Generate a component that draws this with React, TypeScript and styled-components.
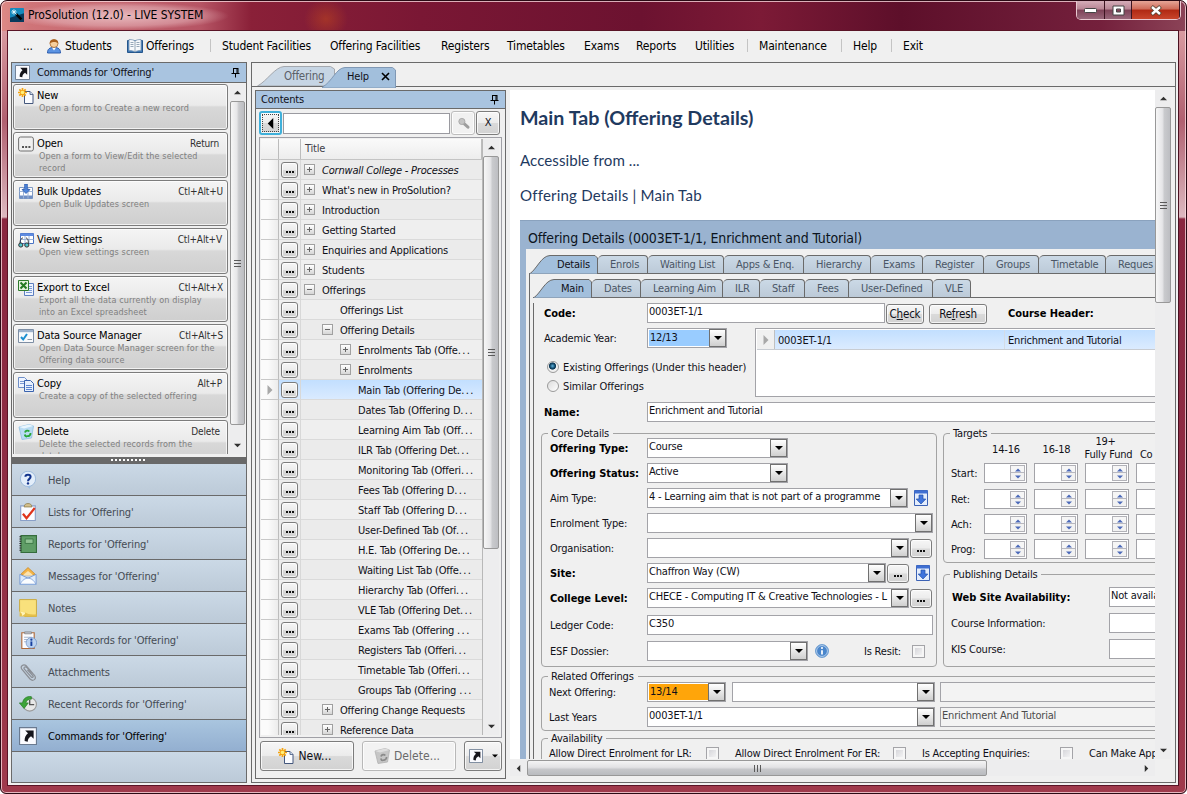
import React from 'react';
import styled, { createGlobalStyle, css } from 'styled-components';

const Global = createGlobalStyle`
  *, *::before, *::after { box-sizing: border-box; }
  html, body { margin: 0; padding: 0; overflow: hidden; }
  body {
    font-family: 'DejaVu Sans Condensed', 'DejaVu Sans', sans-serif;
    font-stretch: condensed;
    font-size: 11px;
    letter-spacing: -0.2px;
    line-height: 14px;
    color: #101018;
  }
`;

/* ---------- window frame ---------- */

const Frame = styled.div`
  width: 1187px;
  height: 794px;
  display: flex;
  flex-direction: column;
  padding: 0 7px 7px 6px;
  border: 1px solid #2a0a14;
  border-radius: 7px 7px 6px 6px;
  background:
    radial-gradient(ellipse 110px 14px at 118px 15px, rgba(240, 205, 208, 0.8) 0, rgba(230, 180, 186, 0.55) 70%, rgba(200, 120, 135, 0) 100%) 0 0 / 100% 30px no-repeat,
    radial-gradient(ellipse 22px 20px at 325px 18px, rgba(190, 70, 30, 0.55), rgba(160, 50, 40, 0)) 0 0 / 100% 30px no-repeat,
    linear-gradient(90deg, #dd8a86 0, #cf7478 30px, #b65464 200px, #8a2038 250px, #7a1734 420px, #6c1230 640px, #7c1a36 760px, #5d0f2a 900px, #74203c 1100px, #8c4458 1187px) 0 0 / 100% 30px no-repeat,
    linear-gradient(180deg, #d99aa0 30px, #b06070 120px, #ddb9c0 216px, #8a2740 218px, #8f2d44 500px, #a03a4c 794px);
  box-shadow: inset 0 0 0 1px rgba(255, 225, 230, 0.75);
`;

const TitleBar = styled.div`
  height: 29px;
  flex: none;
  display: flex;
  padding-left: 3px;
`;

const TitleText = styled.div`
  margin: 7px 0 0 4px;
  font-size: 12px;
  line-height: 15px;
  height: 15px;
  letter-spacing: -0.07px;
  color: #000;
`;

const WinButtons = styled.div`
  margin-left: auto;
  margin-right: -2px;
  display: flex;
  height: 19px;
  border: 1px solid #e9c9d0;
  border-top: 0;
  border-radius: 0 0 5px 5px;
  overflow: hidden;
`;

const WinButton = styled.div<{ $w: number; $close?: boolean }>`
  width: ${(p) => p.$w}px;
  display: flex;
  align-items: center;
  justify-content: center;
  border-right: 1px solid #3c1420;
  background: ${(p) =>
    p.$close
      ? 'linear-gradient(180deg, #e6a597 0, #cf6a58 45%, #b02813 50%, #c8452c 100%)'
      : 'linear-gradient(180deg, #d5adb8 0, #b88594 45%, #7e4257 50%, #98677a 100%)'};
`;

const Client = styled.div`
  flex: 1;
  min-height: 0;
  display: flex;
  flex-direction: column;
  background: #f0f0f0;
  border: 1px solid #5a1426;
  border-right-color: #4a1020;
`;

/* ---------- menu ---------- */

const MenuBar = styled.div`
  height: 31px;
  flex: none;
  display: flex;
  align-items: center;
  padding-bottom: 2px;
  font-size: 12px;
  letter-spacing: -0.17px;
  color: #000;
`;

const MenuItem = styled.div<{ $w: number }>`
  width: ${(p) => p.$w}px;
  flex: none;
  display: flex;
  align-items: center;
  gap: 3px;
  white-space: nowrap;
`;

const MenuSep = styled.div`
  width: 1px;
  height: 13px;
  background: #c4c4c4;
  margin-right: 11px;
`;

const Workspace = styled.div`
  flex: 1;
  min-height: 0;
  display: flex;
  padding: 0 2px 2px 3px;
  gap: 4px;
`;

/* ---------- shared pieces ---------- */

const PanelHeader = styled.div<{ $h: number }>`
  height: ${(p) => p.$h}px;
  flex: none;
  display: flex;
  align-items: center;
  background: #a9c4e0;
  border-bottom: 1px solid #6a6a6a;
`;

const Spacer = styled.div`
  flex: 1;
`;

const VBar = styled.div<{ $w?: number }>`
  width: ${(p) => p.$w ?? 16}px;
  flex: none;
  display: flex;
  flex-direction: column;
  background: #ededee;
`;

const Arrow = styled.div<{ $len: number; $row?: boolean }>`
  ${(p) => (p.$row ? `width: ${p.$len}px;` : `height: ${p.$len}px;`)}
  flex: none;
  display: flex;
  align-items: center;
  justify-content: center;
`;

const Thumb = styled.div<{ $len: number; $row?: boolean }>`
  ${(p) =>
    p.$row
      ? `width: ${p.$len}px; background: linear-gradient(180deg, #f4f4f4, #e2e2e4 45%, #c6c7ca 60%, #b9bbbf);`
      : `height: ${p.$len}px; background: linear-gradient(90deg, #f6f6f6, #e6e6e8 45%, #c9cacd 60%, #bdbec2);`}
  flex: none;
  border: 1px solid #989898;
  border-radius: 2px;
  display: flex;
  align-items: center;
  justify-content: center;
`;

const Tri = ({ dir, size = 7, color = '#303030' }: { dir: 'up' | 'down' | 'left' | 'right'; size?: number; color?: string }) => {
  const d = { up: 'M0 6 4 2 8 6z', down: 'M0 2 8 2 4 6z', left: 'M6 0 6 8 2 4z', right: 'M2 0 2 8 6 4z' }[dir];
  return (
    <svg width={size} height={size} viewBox="0 0 8 8">
      <path d={d} fill={color} />
    </svg>
  );
};

const Grip = ({ row }: { row?: boolean }) => (
  <svg width="9" height="9" viewBox="0 0 9 9">
    {[1, 4, 7].map((n) =>
      row ? (
        <path key={n} d={`M${n + 0.5} 1v7`} stroke="#5a5a5a" />
      ) : (
        <path key={n} d={`M1 ${n + 0.5}h7`} stroke="#5a5a5a" />
      ),
    )}
  </svg>
);

const Pin = () => (
  <svg width="9" height="11" viewBox="0 0 9 11">
    <path d="M2.5 1v5M2 1.5h5M6 1v5M7 1v5M0.5 6.5h8M4.5 6.5v4" fill="none" stroke="#000" />
  </svg>
);

/* ---------- icons ---------- */

type IconName =
  | 'wand' | 'user' | 'book' | 'shortcut' | 'new' | 'dots' | 'bulk' | 'view' | 'excel' | 'source' | 'copy' | 'bin'
  | 'help' | 'list' | 'report' | 'mail' | 'note' | 'audit' | 'clip' | 'recent' | 'binGrey' | 'search' | 'down' | 'info';

const art: Record<IconName, React.ReactNode> = {
  wand: (
    <>
      <rect x="0" y="0" width="16" height="16" rx="1" fill="#1489bd" />
      <path d="M0 16v-5l16-5v10z" fill="#083a5c" />
      <path d="M7 7l6 6" stroke="#000" strokeWidth="3" />
      <path d="M4.500 1.500v6M1.500 4.500h6M2.500 2.500l5 5M6.500 2.500l-4 4" stroke="#e8fbff" strokeWidth="1" />
    </>
  ),
  user: (
    <>
      <path d="M1.500 15c0-4 2-5.500 6.500-5.500s6.500 1.500 6.500 5.500z" fill="#5b93e2" stroke="#2c5cae" />
      <path d="M6 9.500l2 3 2-3z" fill="#fff" />
      <circle cx="8" cy="5.500" r="4" fill="#f7cf9c" stroke="#a6672c" strokeWidth=".8" />
      <path d="M3.800 5.500C3 0 13 0 12.200 5.500 10.500 3.500 6 3.500 3.800 5.500z" fill="#a8601f" />
    </>
  ),
  book: (
    <>
      <path d="M0.500 2.500h15v12h-15z" fill="#3f79b5" stroke="#25568c" />
      <path d="M2 1.500c3 0 5 .5 6 1.500 1-1 3-1.500 6-1.500v11c-3 0-5 .5-6 1.500-1-1-3-1.500-6-1.500z" fill="#f6f9fc" stroke="#7b98b5" strokeWidth=".8" />
      <path d="M8 3v11M3.500 4.500h3M3.500 6.500h3M3.500 8.500h3M9.500 4.500h3M9.500 6.500h3M9.500 8.500h3" stroke="#8b9db0" strokeWidth=".9" />
    </>
  ),
  shortcut: (
    <>
      <path d="M.5.5h15v15H.5z" fill="#fafbff" stroke="#6a7a90" />
      <path d="M5.500 3h7.500v7.500l-2.300-2.300C8.500 9.500 7.800 11 7.800 13L5 12.500c-.2-3 1-5.500 3-7z" fill="#15151c" />
    </>
  ),
  new: (
    <>
      <path d="M6.500 3.500h5.500l3 3v9H6.500z" fill="#fbfcff" stroke="#44577c" />
      <path d="M12 3.500v3h3" fill="#cfdcf0" stroke="#44577c" strokeWidth=".8" />
      <path d="M4.500 0v9M0 4.500h9M1.300 1.300l6.400 6.400M7.700 1.300L1.300 7.700" stroke="#f4a310" strokeWidth="1.700" />
      <circle cx="4.500" cy="4.500" r="1.800" fill="#fff07a" />
    </>
  ),
  dots: (
    <>
      <rect x=".6" y="1" width="14.800" height="14" rx="2" fill="#f0f0f0" stroke="#707070" />
      <path d="M4 11h2M7.200 11h2M10.400 11h2" stroke="#202020" strokeWidth="1.600" />
    </>
  ),
  bulk: (
    <>
      <path d="M1.500 3.500h13v11h-13z" fill="#fff" stroke="#7f9ac4" />
      <path d="M1.500 11.500h13v3h-13z" fill="#6f8ec4" />
      <path d="M1.500 7.500h13M5.500 3.500v11M10 3.500v11" stroke="#9db4d8" />
      <path d="M6.700 0h2.600v5.500H12L8 9.500 4 5.500h2.700z" fill="#4f86dc" stroke="#2a58ac" strokeWidth=".8" />
    </>
  ),
  view: (
    <>
      <path d="M2.500 1.500h13v10h-13z" fill="#fff" stroke="#4a74c4" />
      <path d="M2.500 1.500h13v2.500h-13z" fill="#5e8be0" />
      <path d="M2.500 7.500h13M7 4v7.500M11 4v7.500" stroke="#9db4d8" />
      <path d="M2 12c0-4 1-6 3-6M10.500 12c0-4-1-6-2.500-6" stroke="#333" fill="none" />
      <circle cx="2.800" cy="13" r="2.100" fill="#4fc4cc" stroke="#333" />
      <circle cx="8.800" cy="13" r="2.100" fill="#4fc4cc" stroke="#333" />
    </>
  ),
  excel: (
    <>
      <path d="M6.500 3.500h9v12h-9z" fill="#eef4ff" stroke="#5c7fc0" />
      <path d="M8 12.500h6M11 6.500h3M11 8.500h3M11 10.500h3" stroke="#7b9ad4" />
      <path d="M.5.500h10v10H.5z" fill="#e5f2df" stroke="#2d7a2b" />
      <path d="M2.500 2.500l6 6M8.500 2.500l-6 6" stroke="#257a24" strokeWidth="2" />
    </>
  ),
  source: (
    <>
      <path d="M.5 1.500h15v13H.5z" fill="#f8fafc" stroke="#7d8ea4" />
      <path d="M1 2h14v2.200H1z" fill="#9db2cc" />
      <path d="M3 9l2.200 2.500L9 6" fill="none" stroke="#1c8fd0" strokeWidth="2" />
      <path d="M9.500 11.500h4.500" stroke="#8a96a4" />
    </>
  ),
  copy: (
    <>
      <path d="M.5 1.500h6l3 3v7h-9z" fill="#eef4ff" stroke="#6f8fc8" />
      <path d="M2 5.500h5M2 7.500h5" stroke="#7b9ad4" />
      <path d="M6.500 4.500h6l3 3v8h-9z" fill="#e6effd" stroke="#3a63ae" />
      <path d="M8 9.500h6M8 11.500h6M8 13.500h6" stroke="#5d85cf" />
    </>
  ),
  bin: (
    <>
      <path d="M1 3l10-2.500L15.500 2 13.500 14 4 15.500z" fill="#b9dcf4" stroke="#8fbfe2" strokeWidth=".8" />
      <path d="M1 3l10-2.500L15.500 2 6 4.500z" fill="#e9f6fe" />
      <path d="M7 8.500c.5-2 3-2.500 4.300-1M12.500 9c.2 2-1.500 3.500-3.500 3M6.800 10.500c.2 1 1 2 2.200 2" fill="none" stroke="#28a838" strokeWidth="1.900" />
    </>
  ),
  binGrey: (
    <>
      <path d="M1 3l10-2.500L15.500 2 13.500 14 4 15.500z" fill="#c6c6c6" stroke="#b2b2b2" strokeWidth=".8" />
      <path d="M1 3l10-2.500L15.500 2 6 4.500z" fill="#dedede" />
      <path d="M7 8.500c.5-2 3-2.500 4.300-1M12.500 9c.2 2-1.500 3.500-3.500 3M6.800 10.500c.2 1 1 2 2.200 2" fill="none" stroke="#8a8a8a" strokeWidth="1.700" />
    </>
  ),
  help: (
    <>
      <circle cx="8" cy="7" r="6.800" fill="#e3eefa" stroke="#8fb0d6" strokeWidth=".7" />
      <path d="M7 13.500l2.500 2.500.7-3z" fill="#9fbfe4" />
      <path d="M5.700 5.200C5.700 2.600 10.300 2.600 10.300 5.200 10.300 7 8 7 8 9" fill="none" stroke="#12338c" strokeWidth="1.800" />
      <circle cx="8" cy="11" r="1.100" fill="#12338c" />
    </>
  ),
  list: (
    <>
      <path d="M1.500 2.500h13v13h-13z" fill="#fbfcff" stroke="#8aa0c8" />
      <path d="M4.500 3.500C5 1 6 .5 8 .5s3 .5 3.500 3z" fill="#d5c08c" stroke="#8d7a4a" strokeWidth=".7" />
      <path d="M3.500 9.500l3.200 4L14 4.500" fill="none" stroke="#e0341c" strokeWidth="2" />
    </>
  ),
  report: (
    <>
      <path d="M1.800.5h13.700v15H1.800z" fill="#5f9d66" stroke="#356c3c" />
      <path d="M5.500 3.500h7v4h-7z" fill="#8fc293" stroke="#3c7745" strokeWidth=".8" />
      <path d="M1.200 1v14" stroke="#222" strokeWidth="1.600" strokeDasharray="1 1" />
    </>
  ),
  mail: (
    <>
      <path d="M1 7l7-6.500L15 7z" fill="#f5b547" stroke="#c98a26" strokeWidth=".7" />
      <path d="M3 7.500L8 3.500l5 4z" fill="#fbe3b0" />
      <path d="M.8 6.500L8 10l7.200-3.500v9H.8z" fill="#dcebfc" stroke="#7397d2" strokeWidth=".8" />
      <path d="M1 15.300c2-4 4.500-5.300 7-5.300s5 1.300 7 5.300z" fill="#fbfdff" stroke="#86a7da" strokeWidth=".8" />
    </>
  ),
  note: (
    <>
      <path d="M.5.500h15v15H5L.5 11z" fill="#f9e17c" stroke="#c7a63a" strokeWidth=".8" />
      <path d="M.5 11v4.500H15.500v-2C11 14 7.500 13.500 5.500 12z" fill="#e5c04a" />
      <path d="M.5 11c2 1.500 2.500 2.500 2 4 2-.5 3-1.500 3-3z" fill="#fff4b8" />
    </>
  ),
  audit: (
    <>
      <path d="M2.500 1.500h11v14h-11z" fill="#fbfcff" stroke="#b06a3a" />
      <path d="M5 2.500h6V.800H5z" fill="#c3c9d4" stroke="#777" strokeWidth=".6" />
      <path d="M4.500 5.500h7M4.500 7.500h5M4.500 9.500h4" stroke="#a8b6cc" />
      <circle cx="11" cy="10.500" r="4.700" fill="#bcd3f0" stroke="#7597c8" strokeWidth=".7" />
      <path d="M11 9.300v4" stroke="#163f9e" strokeWidth="1.700" />
      <circle cx="11" cy="7.700" r="1" fill="#163f9e" />
    </>
  ),
  clip: (
    <path
      d="M12.500 9.500L6.500 2.500C4 .3 .8 2.800 2.500 5.500l7.300 8.700c2.700 2.600 6.200 0 4-3.200L7 4C5.300 2.600 3.800 4 4.800 5.500l6.200 7c1 .8 2-.2 1.400-1L7.500 6"
      fill="none"
      stroke="#8b8f96"
      strokeWidth="1.100"
    />
  ),
  recent: (
    <>
      <circle cx="9.500" cy="8.300" r="6" fill="#e8e8e8" stroke="#9a9a9a" />
      <path d="M9.500 4.500v4h4" fill="none" stroke="#555" strokeWidth="1.200" />
      <path d="M11 1.500C7 .8 3.700 3 3.200 7H.3l4.200 5 3.800-5H6c.5-2 2.500-3.500 5-3.300z" fill="#3ea43a" stroke="#257a24" strokeWidth=".6" />
    </>
  ),
  search: (
    <>
      <path d="M8 7.500l5.500 5" stroke="#9d9d9d" strokeWidth="3.600" strokeLinecap="round" />
      <circle cx="6" cy="5.500" r="3.800" fill="#c4c4c4" stroke="#a2a2a2" />
    </>
  ),
  down: (
    <>
      <path d="M1.500.5h13v15h-13z" fill="#e4edfc" stroke="#3c62b4" />
      <path d="M1.500.5h13v3h-13z" fill="#3f6fd2" />
      <path d="M6 5h4v4h2.800L8 14 3.200 9H6z" fill="#3f74dc" stroke="#2450a8" strokeWidth=".7" />
    </>
  ),
  info: (
    <>
      <circle cx="8" cy="8" r="7.400" fill="#4a86cb" stroke="#6a9cd0" />
      <circle cx="8" cy="8" r="6.200" fill="none" stroke="#cfe2f6" strokeWidth=".9" />
      <path d="M8 7v5" stroke="#fff" strokeWidth="2" />
      <circle cx="8" cy="4.600" r="1.200" fill="#fff" />
    </>
  ),
};

const Svg = styled.svg`
  display: block;
  flex: none;
`;

const Icon = ({ name, size = 16 }: { name: IconName; size?: number }) => (
  <Svg width={size} height={size} viewBox="0 0 16 16">
    {art[name]}
  </Svg>
);

/* ---------- left panel ---------- */

const SidePanel = styled.div`
  width: 236px;
  flex: none;
  display: flex;
  flex-direction: column;
  border: 1px solid #6a6a6a;
  background: #f0f0f0;
`;

const CommandArea = styled.div`
  height: 374px;
  flex: none;
  display: flex;
  padding: 1px 1px 3px 1px;
`;

const CommandList = styled.div`
  width: 215px;
  height: 370px;
  overflow: hidden;
  display: flex;
  flex-direction: column;
  gap: 2px;
  margin-right: 2px;
`;

const Command = styled.div`
  height: 46px;
  flex: none;
  display: flex;
  padding: 3px 4px 0 4px;
  border: 1px solid #7c7c7c;
  border-radius: 3px;
  background: linear-gradient(180deg, #f4f4f4 0, #eaeaea 46%, #d8d8d8 50%, #cfcfcf 100%);
  box-shadow: inset 0 0 0 1px rgba(255, 255, 255, 0.7);
`;

const CommandText = styled.div`
  flex: 1;
  min-width: 0;
  padding-left: 3px;
`;

const CommandTop = styled.div`
  display: flex;
  justify-content: space-between;
  height: 14px;
  color: #000;
  line-height: 16px;
  letter-spacing: -0.15px;
`;

const Shortcut = styled.span<{ $inset?: number }>`
  font-size: 10px;
  letter-spacing: -0.15px;
  color: #303030;
  margin-right: ${(p) => p.$inset ?? 0}px;
`;

const CommandDesc = styled.div`
  padding-left: 2px;
  font-size: 9px;
  line-height: 12px;
  letter-spacing: 0.12px;
  color: #808080;
  white-space: pre;
`;

const Splitter = styled.div`
  height: 7px;
  flex: none;
  display: flex;
  align-items: center;
  justify-content: center;
  background: #696969;
`;

const Nav = styled.div`
  flex: 1;
  display: flex;
  flex-direction: column;
`;

const NavItem = styled.div<{ $active?: boolean }>`
  height: 32px;
  flex: none;
  display: flex;
  align-items: center;
  gap: 11px;
  padding-left: 7px;
  border-bottom: 1px solid #6a6a6a;
  letter-spacing: -0.12px;
  color: ${(p) => (p.$active ? '#000' : '#454b54')};
  background: ${(p) => (p.$active ? 'linear-gradient(180deg, #a9c5df, #93afd0)' : 'linear-gradient(180deg, #cbd9e6, #bccad8)')};
`;

const NavLabel = styled.span`
  padding-top: 2px;
`;

const NavRest = styled.div`
  flex: 1;
  background: linear-gradient(180deg, #cbd9e6, #bccad8);
`;

const commands: { icon: IconName; title: string; key?: string; inset?: number; desc: string }[] = [
  { icon: 'new', title: 'New', desc: 'Open a form to Create a new record' },
  { icon: 'dots', title: 'Open', key: 'Return', inset: 4, desc: 'Open a form to View/Edit the selected\nrecord' },
  { icon: 'bulk', title: 'Bulk Updates', key: 'Ctl+Alt+U', desc: 'Open Bulk Updates screen' },
  { icon: 'view', title: 'View Settings', key: 'Ctl+Alt+V', inset: 1, desc: 'Open view settings screen' },
  { icon: 'excel', title: 'Export to Excel', key: 'Ctl+Alt+X', desc: 'Export all the data currently on display\ninto an Excel spreadsheet' },
  { icon: 'source', title: 'Data Source Manager', key: 'Ctl+Alt+S', desc: 'Open Data Source Manager screen for the\nOffering data source' },
  { icon: 'copy', title: 'Copy', key: 'Alt+P', inset: 1, desc: 'Create a copy of the selected offering' },
  { icon: 'bin', title: 'Delete', key: 'Delete', inset: 3, desc: 'Delete the selected records from the\ndatabase' },
];

const navItems: { icon: IconName; label: string; active?: boolean }[] = [
  { icon: 'help', label: 'Help' },
  { icon: 'list', label: "Lists for 'Offering'" },
  { icon: 'report', label: "Reports for 'Offering'" },
  { icon: 'mail', label: "Messages for 'Offering'" },
  { icon: 'note', label: 'Notes' },
  { icon: 'audit', label: "Audit Records for 'Offering'" },
  { icon: 'clip', label: 'Attachments' },
  { icon: 'recent', label: "Recent Records for 'Offering'" },
  { icon: 'shortcut', label: "Commands for 'Offering'", active: true },
];

const HeaderLabel = styled.span<{ $ml: number }>`
  margin-left: ${(p) => p.$ml}px;
`;

const PinBox = styled.div`
  margin-right: 6px;
  display: flex;
`;

const Sidebar = () => (
  <SidePanel>
    <PanelHeader $h={20}>
      <HeaderLabel $ml={3}>
        <Icon name="shortcut" size={15} />
      </HeaderLabel>
      <HeaderLabel $ml={7}>Commands for 'Offering'</HeaderLabel>
      <Spacer />
      <PinBox>
        <Pin />
      </PinBox>
    </PanelHeader>
    <CommandArea>
      <CommandList>
        {commands.map((c) => (
          <Command key={c.title}>
            <Icon name={c.icon} />
            <CommandText>
              <CommandTop>
                <span>{c.title}</span>
                {c.key && <Shortcut $inset={c.inset}>{c.key}</Shortcut>}
              </CommandTop>
              <CommandDesc>{c.desc}</CommandDesc>
            </CommandText>
          </Command>
        ))}
      </CommandList>
      <VBar $w={15}>
        <Arrow $len={17}>
          <Tri dir="up" />
        </Arrow>
        <Thumb $len={324}>
          <Grip />
        </Thumb>
        <Spacer />
        <Arrow $len={17}>
          <Tri dir="down" />
        </Arrow>
      </VBar>
    </CommandArea>
    <Splitter>
      <svg width="36" height="3" viewBox="0 0 36 3">
        {Array.from({ length: 9 }, (_, i) => (
          <rect key={i} x={i * 4} y="0" width="2" height="2" fill="#fff" />
        ))}
      </svg>
    </Splitter>
    <Nav>
      {navItems.map((n) => (
        <NavItem key={n.label} $active={n.active}>
          <Icon name={n.icon} size={18} />
          <NavLabel>{n.label}</NavLabel>
        </NavItem>
      ))}
      <NavRest />
    </Nav>
  </SidePanel>
);

/* ---------- main area ---------- */

const MainPanel = styled.div`
  flex: 1;
  min-width: 0;
  display: flex;
  flex-direction: column;
  border: 1px solid #6a6a6a;
`;

const DocTabs = styled.div`
  height: 24px;
  flex: none;
  display: flex;
  align-items: flex-end;
  padding-left: 5px;
  border-bottom: 1px solid #6a6a6a;
`;

const DocTab = styled.div<{ $w: number; $active?: boolean }>`
  width: ${(p) => p.$w}px;
  height: 20px;
  flex: none;
  display: flex;
  position: relative;
  ${(p) => p.$active && 'margin-left: -13px;'}
  margin-bottom: ${(p) => (p.$active ? -1 : 0)}px;
  font-size: ${(p) => (p.$active ? 11 : 11.5)}px;
  color: ${(p) => (p.$active ? '#101018' : '#5a6068')};
`;

const DocTabShape = styled.svg`
  position: absolute;
  left: 0;
  top: 0;
`;

const DocTabLabel = styled.div<{ $ml: number }>`
  position: relative;
  margin: 2px 0 0 ${(p) => p.$ml}px;
  display: flex;
  gap: 12px;
  align-items: center;
  height: 15px;
`;

const Split = styled.div`
  flex: 1;
  min-height: 0;
  display: flex;
  padding: 3px 4px 3px 3px;
  gap: 4px;
`;

const Contents = styled.div`
  width: 251px;
  flex: none;
  display: flex;
  flex-direction: column;
  border: 1px solid #6a6a6a;
`;

const SearchRow = styled.div`
  height: 28px;
  flex: none;
  display: flex;
  align-items: center;
  gap: 1px;
  padding-left: 3px;
`;

const buttonFace = css`
  border: 1px solid #7c7c7c;
  border-radius: 3px;
  background: linear-gradient(180deg, #f6f6f6 0, #ececec 48%, #dadada 52%, #d2d2d2 100%);
  box-shadow: inset 0 0 0 1px rgba(255, 255, 255, 0.75);
`;

const SquareButton = styled.div<{ $focus?: boolean; $disabled?: boolean }>`
  width: 24px;
  height: 24px;
  flex: none;
  display: flex;
  align-items: center;
  justify-content: center;
  ${buttonFace}
  ${(p) => p.$focus && 'width: 23px; border: 2px solid #3fb0da; border-radius: 3px; outline: 1px dotted #444; outline-offset: -4px;'}
  ${(p) => p.$disabled && 'border-color: #bdbdbd; background: #f1f1f1;'}
`;

const SearchInput = styled.div`
  width: 167px;
  height: 21px;
  flex: none;
  border: 1px solid #9a9aa0;
  background: #fff;
`;

const TreeBox = styled.div`
  width: 243px;
  height: 601px;
  flex: none;
  margin-left: 3px;
  display: flex;
  padding: 1px 1px 2px 1px;
  border: 1px solid #a0a0a6;
  background: #f0f0f0;
`;

const TreeTable = styled.div`
  width: 222px;
  overflow: hidden;
  border-right: 1px solid #b8b8b8;
`;

const TreeHead = styled.div`
  height: 21px;
  display: grid;
  grid-template-columns: 18px 22px 1fr;
  border-bottom: 1px solid #c4c4c4;
  background: linear-gradient(180deg, #fafafa, #ededed);
  color: #404048;
`;

const HeadCell = styled.div<{ $pl?: number }>`
  padding: 3px 0 0 ${(p) => p.$pl ?? 0}px;
  border-right: 1px solid #bcbcbc;
`;

const TreeRow = styled.div<{ $sel?: boolean; $alt?: boolean }>`
  height: 20px;
  display: grid;
  grid-template-columns: 18px 22px 1fr;
  background: ${(p) => (p.$sel ? 'linear-gradient(180deg, #c2dfff, #dbebff)' : p.$alt ? '#ebebeb' : '#efefef')};
`;

const Gutter = styled.div`
  display: flex;
  align-items: center;
  justify-content: center;
  border-right: 1px solid #bcbcbc;
  border-bottom: 1px solid #c8c8c8;
  background: linear-gradient(90deg, #fbfbfb 40%, #ececec);
`;

const CellBtn = styled.div`
  display: flex;
  align-items: center;
  justify-content: center;
  border-right: 1px solid #d8d8d8;
  border-bottom: 1px solid #dadada;
`;

const Dots = styled.div<{ $w?: number; $h?: number }>`
  width: ${(p) => p.$w ?? 17}px;
  height: ${(p) => p.$h ?? 16}px;
  flex: none;
  display: flex;
  align-items: center;
  justify-content: center;
  ${buttonFace}
`;

const DotsGlyph = () => (
  <svg width="10" height="8" viewBox="0 0 10 8">
    <path d="M1 6h2M4 6h2M7 6h2" stroke="#111" strokeWidth="2" />
  </svg>
);

const TreeCell = styled.div<{ $depth: number; $italic?: boolean }>`
  min-width: 0;
  display: flex;
  align-items: center;
  padding-left: ${(p) => 3 + p.$depth * 18}px;
  border-bottom: 1px solid #dadada;
  white-space: nowrap;
  ${(p) => p.$italic && 'font-style: italic;'}
`;

const Expander = styled.div<{ $kind?: '+' | '-' }>`
  width: 11px;
  height: 11px;
  margin-right: 7px;
  flex: none;
  display: flex;
  ${(p) =>
    p.$kind &&
    `border: 1px solid #a0a0a0;
     background: linear-gradient(90deg, #666, #666) center / 5px 1px no-repeat,
       ${p.$kind === '+' ? 'linear-gradient(90deg, #666, #666) center / 1px 5px no-repeat,' : ''}
       linear-gradient(180deg, #fff, #d6d6d6);`}
`;

const TreeLabel = styled.span`
  padding-top: 2px;
  white-space: nowrap;
`;

const Ellipsis = styled.span`
  letter-spacing: 1.4px;
`;

const tree: { t: string; d: number; k?: '+' | '-'; italic?: boolean; sel?: boolean; cut?: boolean }[] = [
  { t: 'Cornwall College - Processes', d: 0, k: '+', italic: true },
  { t: "What's new in ProSolution?", d: 0, k: '+' },
  { t: 'Introduction', d: 0, k: '+' },
  { t: 'Getting Started', d: 0, k: '+' },
  { t: 'Enquiries and Applications', d: 0, k: '+' },
  { t: 'Students', d: 0, k: '+' },
  { t: 'Offerings', d: 0, k: '-' },
  { t: 'Offerings List', d: 1 },
  { t: 'Offering Details', d: 1, k: '-' },
  { t: 'Enrolments Tab (Offe', d: 2, k: '+', cut: true },
  { t: 'Enrolments', d: 2, k: '+' },
  { t: 'Main Tab (Offering De', d: 2, sel: true, cut: true },
  { t: 'Dates Tab (Offering D', d: 2, cut: true },
  { t: 'Learning Aim Tab (Off', d: 2, cut: true },
  { t: 'ILR Tab (Offering Det', d: 2, cut: true },
  { t: 'Monitoring Tab (Offeri', d: 2, cut: true },
  { t: 'Fees Tab (Offering D', d: 2, cut: true },
  { t: 'Staff Tab (Offering D', d: 2, cut: true },
  { t: 'User-Defined Tab (Of', d: 2, cut: true },
  { t: 'H.E. Tab (Offering De', d: 2, cut: true },
  { t: 'Waiting List Tab (Offe', d: 2, cut: true },
  { t: 'Hierarchy Tab (Offeri', d: 2, cut: true },
  { t: 'VLE Tab (Offering Det', d: 2, cut: true },
  { t: 'Exams Tab (Offering ', d: 2, cut: true },
  { t: 'Registers Tab (Offeri', d: 2, cut: true },
  { t: 'Timetable Tab (Offeri', d: 2, cut: true },
  { t: 'Groups Tab (Offering ', d: 2, cut: true },
  { t: 'Offering Change Requests', d: 1, k: '+' },
  { t: 'Reference Data', d: 1, k: '+' },
];

const FooterButtons = styled.div`
  display: flex;
  gap: 8px;
  padding: 3px 0 0 4px;
`;

const BigButton = styled.div<{ $w: number; $disabled?: boolean; $gap?: number; $pr?: number }>`
  width: ${(p) => p.$w}px;
  height: 30px;
  display: flex;
  align-items: center;
  justify-content: center;
  gap: ${(p) => p.$gap ?? 4}px;
  padding-right: ${(p) => p.$pr ?? 0}px;
  font-size: 12px;
  letter-spacing: 0.05px;
  ${buttonFace}
  ${(p) => p.$disabled && 'border-color: #b8b8b8; background: #f2f2f2; color: #6a6a6a;'}
`;

const ContentsPanel = () => (
  <Contents>
    <PanelHeader $h={18}>
      <HeaderLabel $ml={5}>Contents</HeaderLabel>
      <Spacer />
      <PinBox>
        <Pin />
      </PinBox>
    </PanelHeader>
    <SearchRow>
      <SquareButton $focus>
        <Tri dir="left" size={11} color="#000" />
      </SquareButton>
      <SearchInput />
      <SquareButton $disabled>
        <Icon name="search" size={13} />
      </SquareButton>
      <SquareButton>X</SquareButton>
    </SearchRow>
    <TreeBox>
      <TreeTable>
        <TreeHead>
          <HeadCell />
          <HeadCell />
          <HeadCell $pl={4}>Title</HeadCell>
        </TreeHead>
        {tree.map((r, i) => (
          <TreeRow key={r.t} $sel={r.sel} $alt={i % 2 === 0}>
            <Gutter>{r.sel && <Tri dir="right" size={10} color="#a8a8a8" />}</Gutter>
            <CellBtn>
              <Dots>
                <DotsGlyph />
              </Dots>
            </CellBtn>
            <TreeCell $depth={r.d} $italic={r.italic}>
              <Expander $kind={r.k} />
              <TreeLabel>
                {r.t}
                {r.cut && <Ellipsis>...</Ellipsis>}
              </TreeLabel>
            </TreeCell>
          </TreeRow>
        ))}
      </TreeTable>
      <VBar $w={16}>
        <Arrow $len={17}>
          <Tri dir="up" />
        </Arrow>
        <Thumb $len={393}>
          <Grip />
        </Thumb>
        <Spacer />
        <Arrow $len={18}>
          <Tri dir="down" />
        </Arrow>
      </VBar>
    </TreeBox>
    <FooterButtons>
      <BigButton $w={94} $pr={4}>
        <Icon name="new" /> New...
      </BigButton>
      <BigButton $w={94} $disabled $pr={4}>
        <Icon name="binGrey" /> Delete...
      </BigButton>
      <BigButton $w={38} $gap={9}>
        <Icon name="shortcut" size={14} />
        <Tri dir="down" size={6} color="#000" />
      </BigButton>
    </FooterButtons>
  </Contents>
);

/* ---------- help document ---------- */

const Viewer = styled.div`
  flex: 1;
  min-width: 0;
  display: grid;
  grid-template-columns: 645px 16px;
  grid-template-rows: 669px 17px;
`;

const Page = styled.div`
  overflow: hidden;
  background: #fff;
  padding-left: 10px;
`;

const Heading = styled.h1`
  margin: 0;
  padding-top: 16px;
  height: 60px;
  font: 700 19.7px/24px Lato, sans-serif;
  letter-spacing: 0;
  color: #1f3a5f;
`;

const Para = styled.p<{ $ls?: number }>`
  margin: 0;
  height: 35px;
  font: 400 15.100px/20px Lato, sans-serif;
  letter-spacing: ${(p) => p.$ls ?? 0}px;
  color: #1f3a5f;
`;

const Shot = styled.div`
  width: 700px;
  height: 560px;
  background: #9ab3d0;
  border-top: 1px solid #8aa2be;
  padding-left: 6px;
`;

const ShotTitle = styled.div`
  height: 28px;
  padding: 9px 0 0 2px;
  font-size: 14px;
  line-height: 16px;
  letter-spacing: -0.15px;
  color: #0c1420;
  white-space: nowrap;
`;

const ShotBody = styled.div`
  height: 532px;
  background: #f0f0f0;
  padding: 6px 0 0 3px;
`;

const TabStrip = styled.div`
  height: 19px;
  display: flex;
  border-bottom: 1px solid #6a6a6a;
`;

const FirstTab = styled.div<{ $w: number }>`
  width: ${(p) => p.$w}px;
  height: 19px;
  flex: none;
  position: relative;
`;

const FirstTabLabel = styled.span`
  position: relative;
  display: block;
  padding: 3px 0 0 28px;
`;

const ShotTab = styled.div<{ $w: number }>`
  width: ${(p) => p.$w}px;
  height: 18px;
  flex: none;
  padding: 2px 0 0 12px;
  border-top: 1px solid #6a6a6a;
  border-right: 1px solid #6a6a6a;
  border-radius: 5px 4px 0 0;
  background: linear-gradient(180deg, #cbd9e6, #bccad8);
  color: #4a5666;
  white-space: nowrap;
`;

const Tabs = ({ first, w, tabs }: { first: string; w: number; tabs: [string, number][] }) => (
  <TabStrip>
    <FirstTab $w={w}>
      <DocTabShape width={w} height="19" viewBox={`0 0 ${w} 19`}>
        <path d={`M.5 19C8 14 12 1 21 .5H${w - 3}L${w - 0.5} 3V19z`} fill="#a2bfdc" stroke="#6a6a6a" />
        <path d={`M1 19H${w - 1}`} stroke="#96b3d2" />
      </DocTabShape>
      <FirstTabLabel>{first}</FirstTabLabel>
    </FirstTab>
    {tabs.map(([label, tw]) => (
      <ShotTab key={label} $w={tw}>
        {label}
      </ShotTab>
    ))}
  </TabStrip>
);

const OuterPage = styled.div`
  height: 520px;
  border-left: 1px solid #6a6a6a;
  padding: 5px 0 0 3px;
`;

const InnerPage = styled.div`
  height: 480px;
  border-left: 1px solid #6a6a6a;
  padding-left: 7px;
`;

const Row = styled.div<{ $mt?: number; $h?: number; $pl?: number }>`
  height: ${(p) => p.$h ?? 20}px;
  margin-top: ${(p) => p.$mt ?? 5}px;
  padding-left: ${(p) => p.$pl ?? 0}px;
  display: flex;
  align-items: center;
  white-space: nowrap;
`;

const FieldLabel = styled.div<{ $w: number; $bold?: boolean; $ml?: number }>`
  width: ${(p) => p.$w}px;
  flex: none;
  margin-left: ${(p) => p.$ml ?? 0}px;
  padding-top: 2px;
  white-space: nowrap;
  ${(p) => p.$bold && 'font-weight: 700; color: #000; letter-spacing: -0.05px;'}
`;

const Field = styled.div<{ $w: number; $ml?: number; $dim?: boolean }>`
  width: ${(p) => p.$w}px;
  height: 20px;
  flex: none;
  margin-left: ${(p) => p.$ml ?? 0}px;
  display: flex;
  border: 1px solid #a3a3a8;
  background: ${(p) => (p.$dim ? '#f3f3f3' : '#fff')};
  color: ${(p) => (p.$dim ? '#4c4c4c' : '#101018')};
  overflow: hidden;
`;

const FieldText = styled.div<{ $bg?: string }>`
  flex: 1;
  min-width: 0;
  overflow: hidden;
  padding: 1px 0 0 1px;
  ${(p) => p.$bg && `margin: 1px 0 1px 1px; padding: 1px 0 0 1px; background: ${p.$bg};`}
`;

const DropBtn = styled.div`
  width: 17px;
  height: 18px;
  flex: none;
  display: flex;
  align-items: center;
  justify-content: center;
  border: 1px solid #707070;
  background: linear-gradient(180deg, #fff, #cfcfcf);
`;

const Combo = ({ w, text, bg, ml }: { w: number; text?: string; bg?: string; ml?: number }) => (
  <Field $w={w} $ml={ml}>
    <FieldText $bg={bg}>{text}</FieldText>
    <DropBtn>
      <Tri dir="down" size={8} color="#000" />
    </DropBtn>
  </Field>
);

const FormButton = styled.div<{ $w: number; $ml: number }>`
  width: ${(p) => p.$w}px;
  height: 20px;
  flex: none;
  margin-left: ${(p) => p.$ml}px;
  margin-top: 1px;
  text-align: center;
  line-height: 19px;
  font-size: 11.5px;
  ${buttonFace}
`;

const Shift = styled.div<{ $ml: number; $mt?: number }>`
  flex: none;
  margin-left: ${(p) => p.$ml}px;
  margin-top: ${(p) => p.$mt ?? 0}px;
`;

const HeaderRow = styled.div`
  display: flex;
  height: 69px;
  margin-top: 5px;
`;

const YearColumn = styled.div`
  width: 214px;
  flex: none;
`;

const Grid = styled.div`
  flex: 1;
  height: 69px;
  border: 1px solid #a3a3a8;
  border-right: 0;
  background: #fff;
  padding: 1px 0 0 1px;
`;

const GridRow = styled.div`
  height: 20px;
  display: flex;
  align-items: center;
  border-bottom: 1px solid #c8ccd2;
  background: linear-gradient(180deg, #c2dfff, #dbebff);
`;

const GridHandle = styled.div`
  width: 18px;
  height: 19px;
  display: flex;
  align-items: center;
  justify-content: center;
  background: #f0f0f0;
  border-right: 1px solid #c0c0c0;
`;

const GridCell = styled.div<{ $w: number; $line?: boolean }>`
  width: ${(p) => p.$w}px;
  height: 19px;
  padding: 4px 0 0 3px;
  flex: none;
  ${(p) => p.$line && 'border-left: 1px solid #d4dce6;'}
`;

const RadioRow = styled.div<{ $mt: number }>`
  display: flex;
  align-items: center;
  gap: 4px;
  height: 14px;
  margin: ${(p) => p.$mt}px 0 0 6px;
  letter-spacing: -0.12px;
  white-space: nowrap;
`;

const Radio = styled.div<{ $on?: boolean }>`
  width: 12px;
  height: 12px;
  flex: none;
  border: 1px solid #9a9a9a;
  border-radius: 50%;
  background: ${(p) =>
    p.$on ? 'radial-gradient(circle at 45% 40%, #5fb4e0 0, #0f4566 2.500px, #0f3a58 3.200px, #f0f0f0 4px)' : 'linear-gradient(135deg, #dcdcdc, #fff)'};
`;

const RadioLabel = styled.span`
  padding-top: 1px;
`;

const Check = styled.div<{ $ml: number }>`
  width: 13px;
  height: 13px;
  flex: none;
  margin: 1px 0 0 ${(p) => p.$ml}px;
  border: 1px solid #a4a4a8;
  box-shadow: inset 0 0 0 2px #f6f6f6;
  background: linear-gradient(135deg, #cfcfd4, #fafafa);
`;

const Group = styled.fieldset<{ $w: number; $h: number }>`
  width: ${(p) => p.$w}px;
  height: ${(p) => p.$h}px;
  min-width: 0;
  flex: none;
  margin: 0;
  padding: 0;
  border: 1px solid #a3a3a3;
  border-radius: 4px;
`;

const Legend = styled.legend`
  height: 14px;
  line-height: 15px;
  margin-left: 6px;
  padding: 0 4px 0 3px;
`;

const GroupRow = styled.div<{ $mt: number }>`
  display: flex;
  gap: 6px;
  margin-top: ${(p) => p.$mt}px;
`;

const GroupColumn = styled.div`
  display: flex;
  flex-direction: column;
  gap: 4px;
`;

const SpinBox = styled.div<{ $w: number; $ml: number }>`
  width: ${(p) => p.$w}px;
  height: 20px;
  flex: none;
  margin-left: ${(p) => p.$ml}px;
  display: flex;
  justify-content: flex-end;
  padding: 1px;
  border: 1px solid #a3a3a8;
  background: #fff;
`;

const SpinArrows = styled.div`
  width: 15px;
  height: 16px;
  display: grid;
  grid-template-rows: 7px 7px;
  justify-items: center;
  align-items: center;
  border: 1px solid #b2b2b8;
  background: linear-gradient(180deg, #f6f6f6 0 6px, #b8b8c0 6px 7px, #f2f2f2 7px);
`;

const TargetHead = styled.div`
  height: 26px;
  display: flex;
  align-items: flex-end;
  margin-top: -5px;
  line-height: 13px;
  text-align: center;
`;

const HeadText = styled.div<{ $w: number; $up?: number; $left?: boolean }>`
  width: ${(p) => p.$w}px;
  flex: none;
  padding-bottom: ${(p) => p.$up ?? 0}px;
  text-align: ${(p) => (p.$left ? 'left' : 'center')};
  white-space: pre;
`;

const Spin = ({ w = 43, ml = 7 }: { w?: number; ml?: number }) => (
  <SpinBox $w={w} $ml={ml}>
    <SpinArrows>
      <Tri dir="up" size={6} color="#4a68b8" />
      <Tri dir="down" size={6} color="#4a68b8" />
    </SpinArrows>
  </SpinBox>
);

const OfferingShot = () => (
  <Shot>
    <ShotTitle>Offering Details (0003ET-1/1, Enrichment and Tutorial)</ShotTitle>
    <ShotBody>
      <Tabs
        first="Details"
        w={69}
        tabs={[['Enrols', 50], ['Waiting List', 76], ['Apps & Enq.', 80], ['Hierarchy', 67], ['Exams', 52], ['Register', 61], ['Groups', 55], ['Timetable', 67], ['Reques', 80]]}
      />
      <OuterPage>
        <Tabs
          first="Main"
          w={59}
          tabs={[['Dates', 49], ['Learning Aim', 82], ['ILR', 37], ['Staff', 45], ['Fees', 44], ['User-Defined', 84], ['VLE', 38]]}
        />
        <InnerPage>
          <Row $pl={3}>
            <FieldLabel $bold $w={103}>Code:</FieldLabel>
            <Field $w={238}>
              <FieldText>0003ET-1/1</FieldText>
            </Field>
            <FormButton $w={38} $ml={1}>C<u>h</u>eck</FormButton>
            <FormButton $w={58} $ml={5}>Re<u>f</u>resh</FormButton>
            <FieldLabel $bold $w={120} $ml={21}>Course Header:</FieldLabel>
          </Row>
          <HeaderRow>
            <YearColumn>
              <Row $pl={3} $mt={0}>
                <FieldLabel $w={103}>Academic Year:</FieldLabel>
                <Combo w={80} text="12/13" bg="#99ccff" />
              </Row>
              <RadioRow $mt={12}>
                <Radio $on />
                <RadioLabel>Existing Offerings (Under this header)</RadioLabel>
              </RadioRow>
              <RadioRow $mt={5}>
                <Radio />
                <RadioLabel>Similar Offerings</RadioLabel>
              </RadioRow>
            </YearColumn>
            <Grid>
              <GridRow>
                <GridHandle>
                  <Tri dir="right" size={10} color="#a8a8a8" />
                </GridHandle>
                <GridCell $w={229}>0003ET-1/1</GridCell>
                <GridCell $w={170} $line>Enrichment and Tutorial</GridCell>
              </GridRow>
            </Grid>
          </HeaderRow>
          <Row $pl={3} $mt={5}>
            <FieldLabel $bold $w={103}>Name:</FieldLabel>
            <Field $w={600}>
              <FieldText>Enrichment and Tutorial</FieldText>
            </Field>
          </Row>
          <GroupRow $mt={4}>
            <Group $w={396} $h={241}>
              <Legend>Core Details</Legend>
              <Row $pl={8} $mt={-2}>
                <FieldLabel $bold $w={97}>Offering Type:</FieldLabel>
                <Combo w={141} text="Course" />
              </Row>
              <Row $pl={8}>
                <FieldLabel $bold $w={97}>Offering Status:</FieldLabel>
                <Combo w={141} text="Active" />
              </Row>
              <Row $pl={8}>
                <FieldLabel $w={97}>Aim Type:</FieldLabel>
                <Combo w={261} text="4 - Learning aim that is not part of a programme" />
                <Shift $ml={5}>
                  <Icon name="down" />
                </Shift>
              </Row>
              <Row $pl={8}>
                <FieldLabel $w={97}>Enrolment Type:</FieldLabel>
                <Combo w={286} />
              </Row>
              <Row $pl={8}>
                <FieldLabel $w={97}>Organisation:</FieldLabel>
                <Combo w={262} />
                <Shift $ml={1} $mt={1}>
                  <Dots $w={22} $h={19}>
                    <DotsGlyph />
                  </Dots>
                </Shift>
              </Row>
              <Row $pl={8}>
                <FieldLabel $bold $w={97}>Site:</FieldLabel>
                <Combo w={239} text="Chaffron Way (CW)" />
                <Shift $ml={1} $mt={1}>
                  <Dots $w={22} $h={19}>
                    <DotsGlyph />
                  </Dots>
                </Shift>
                <Shift $ml={6}>
                  <Icon name="down" />
                </Shift>
              </Row>
              <Row $pl={8}>
                <FieldLabel $bold $w={97}>College Level:</FieldLabel>
                <Combo w={262} text="CHECE - Computing IT & Creative Technologies - L" />
                <Shift $ml={1} $mt={1}>
                  <Dots $w={22} $h={19}>
                    <DotsGlyph />
                  </Dots>
                </Shift>
              </Row>
              <Row $pl={8} $mt={7}>
                <FieldLabel $w={97}>Ledger Code:</FieldLabel>
                <Field $w={286}>
                  <FieldText>C350</FieldText>
                </Field>
              </Row>
              <Row $pl={8} $mt={6}>
                <FieldLabel $w={97}>ESF Dossier:</FieldLabel>
                <Combo w={161} />
                <Shift $ml={7}>
                  <Icon name="info" size={14} />
                </Shift>
                <FieldLabel $w={48} $ml={35}>Is Resit:</FieldLabel>
                <Check $ml={0} />
              </Row>
            </Group>
            <GroupColumn>
              <Group $w={300} $h={137}>
                <Legend>Targets</Legend>
                <TargetHead>
                  <HeadText $w={38} />
                  <HeadText $w={48} $up={5}>14-16</HeadText>
                  <HeadText $w={53} $up={5}>16-18</HeadText>
                  <HeadText $w={51}>{'19+  \nFully Fund'}</HeadText>
                  <HeadText $w={60} $left>{'  Co'}</HeadText>
                </TargetHead>
                {['Start:', 'Ret:', 'Ach:', 'Prog:'].map((l, i) => (
                  <Row key={l} $pl={7} $mt={[2, 6, 5, 5][i]}>
                    <FieldLabel $w={26}>{l}</FieldLabel>
                    <Spin />
                    <Spin w={44} />
                    <Spin w={44} />
                    <Spin w={44} />
                  </Row>
                ))}
              </Group>
              <Group $w={300} $h={100}>
                <Legend>Publishing Details</Legend>
                <Row $pl={8} $mt={6}>
                  <FieldLabel $bold $w={157}>Web Site Availability:</FieldLabel>
                  <Field $w={120}>
                    <FieldText>Not available</FieldText>
                  </Field>
                </Row>
                <Row $pl={7} $mt={6}>
                  <FieldLabel $w={158}>Course Information:</FieldLabel>
                  <Field $w={120} />
                </Row>
                <Row $pl={7} $mt={6}>
                  <FieldLabel $w={158}>KIS Course:</FieldLabel>
                  <Field $w={120} />
                </Row>
              </Group>
            </GroupColumn>
          </GroupRow>
          <GroupRow $mt={2}>
            <Group $w={700} $h={62}>
              <Legend>Related Offerings</Legend>
              <Row $pl={7} $mt={-1}>
                <FieldLabel $w={98}>Next Offering:</FieldLabel>
                <Combo w={79} text="13/14" bg="#ffa50a" />
                <Combo w={203} ml={6} />
                <Field $w={400} $ml={5} $dim />
              </Row>
              <Row $pl={7}>
                <FieldLabel $w={98}>Last Years</FieldLabel>
                <Combo w={288} text="0003ET-1/1" />
                <Field $w={400} $ml={5} $dim>
                  <FieldText>Enrichment And Tutorial</FieldText>
                </Field>
              </Row>
            </Group>
          </GroupRow>
          <GroupRow $mt={0}>
            <Group $w={700} $h={80}>
              <Legend>Availability</Legend>
              <Row $pl={7} $mt={0} $h={16}>
                <FieldLabel $w={150}>Allow Direct Enrolment for LR:</FieldLabel>
                <Check $ml={7} />
                <FieldLabel $w={150} $ml={16}>Allow Direct Enrolment For ER:</FieldLabel>
                <Check $ml={8} />
                <FieldLabel $w={120} $ml={16}>Is Accepting Enquiries:</FieldLabel>
                <Check $ml={18} />
                <FieldLabel $w={160} $ml={16}>Can Make App</FieldLabel>
              </Row>
            </Group>
          </GroupRow>
        </InnerPage>
      </OuterPage>
    </ShotBody>
  </Shot>
);

const HBar = styled.div`
  height: 16px;
  margin-top: 1px;
  display: flex;
  background: #ededee;
`;

const menu: { label?: string; icon?: IconName; w?: number; sep?: boolean }[] = [
  { label: '...', w: 23 },
  { label: 'Students', icon: 'user', w: 81 },
  { label: 'Offerings', icon: 'book', w: 83 },
  { sep: true },
  { label: 'Student Facilities', w: 108 },
  { label: 'Offering Facilities', w: 111 },
  { label: 'Registers', w: 66 },
  { label: 'Timetables', w: 77 },
  { label: 'Exams', w: 52 },
  { label: 'Reports', w: 59 },
  { label: 'Utilities', w: 52 },
  { sep: true },
  { label: 'Maintenance', w: 82 },
  { sep: true },
  { label: 'Help', w: 38 },
  { sep: true },
  { label: 'Exit', w: 40 },
];

const MenuInset = styled.div`
  width: 15px;
  flex: none;
`;

export default function App() {
  return (
    <>
      <Global />
      <Frame>
        <TitleBar>
          <Shift $ml={0} $mt={7}>
            <Icon name="wand" size={14} />
          </Shift>
          <TitleText>ProSolution (12.0) - LIVE SYSTEM</TitleText>
          <WinButtons>
            <WinButton $w={28}>
              <svg width="13" height="6" viewBox="0 0 13 6">
                <rect x=".5" y="1.500" width="12" height="4" rx="1" fill="#fff" stroke="#444" />
              </svg>
            </WinButton>
            <WinButton $w={27}>
              <svg width="13" height="11" viewBox="0 0 13 11">
                <path d="M1 1h11v9H1zM4.500 4v3h4V4z" fill="#fff" stroke="#444" fillRule="evenodd" />
              </svg>
            </WinButton>
            <WinButton $w={48} $close>
              <svg width="14" height="11" viewBox="0 0 14 11">
                <path d="M2.500 1.500l9 8M11.500 1.500l-9 8" stroke="#543" strokeWidth="4" />
                <path d="M3 2l8 7M11 2L3 9" stroke="#fff" strokeWidth="2.400" />
              </svg>
            </WinButton>
          </WinButtons>
        </TitleBar>
        <Client>
          <MenuBar>
            <MenuInset />
            {menu.map((m, i) =>
              m.sep ? (
                <MenuSep key={i} />
              ) : (
                <MenuItem key={i} $w={m.w ?? 0}>
                  {m.icon && <Icon name={m.icon} />}
                  {m.label}
                </MenuItem>
              ),
            )}
          </MenuBar>
          <Workspace>
            <Sidebar />
            <MainPanel>
              <DocTabs>
                <DocTab $w={78}>
                  <DocTabShape width="78" height="20" viewBox="0 0 78 20">
                    <path d="M.5 20C10 15 18 1 27 .5H73.500L77.500 3V20z" fill="#c6d5e4" stroke="#a4a8ae" />
                  </DocTabShape>
                  <DocTabLabel $ml={27}>Offering</DocTabLabel>
                </DocTab>
                <DocTab $w={74} $active>
                  <DocTabShape width="74" height="21" viewBox="0 0 74 21">
                    <path d="M.5 20C10 15 14 1 23 .5H70.500L73.500 3V21H0z" fill="#a2bfdc" stroke="#8098b4" />
                  </DocTabShape>
                  <DocTabLabel $ml={25}>
                    <span>Help</span>
                    <svg width="9" height="9" viewBox="0 0 9 9">
                      <path d="M1 1l7 7M8 1L1 8" stroke="#000" strokeWidth="1.600" />
                    </svg>
                  </DocTabLabel>
                </DocTab>
              </DocTabs>
              <Split>
                <ContentsPanel />
                <Viewer>
                  <Page>
                    <Heading>Main Tab (Offering Details)</Heading>
                    <Para $ls={0.05}>Accessible from ...</Para>
                    <Para $ls={0.18}>Offering Details | Main Tab</Para>
                    <OfferingShot />
                  </Page>
                  <VBar $w={16}>
                    <Arrow $len={17}>
                      <Tri dir="up" />
                    </Arrow>
                    <Thumb $len={196}>
                      <Grip />
                    </Thumb>
                    <Spacer />
                    <Arrow $len={17}>
                      <Tri dir="down" />
                    </Arrow>
                  </VBar>
                  <HBar>
                    <Arrow $len={17} $row>
                      <Tri dir="left" />
                    </Arrow>
                    <Thumb $len={460} $row>
                      <Grip row />
                    </Thumb>
                    <Spacer />
                    <Arrow $len={17} $row>
                      <Tri dir="right" />
                    </Arrow>
                  </HBar>
                </Viewer>
              </Split>
            </MainPanel>
          </Workspace>
        </Client>
      </Frame>
    </>
  );
}
